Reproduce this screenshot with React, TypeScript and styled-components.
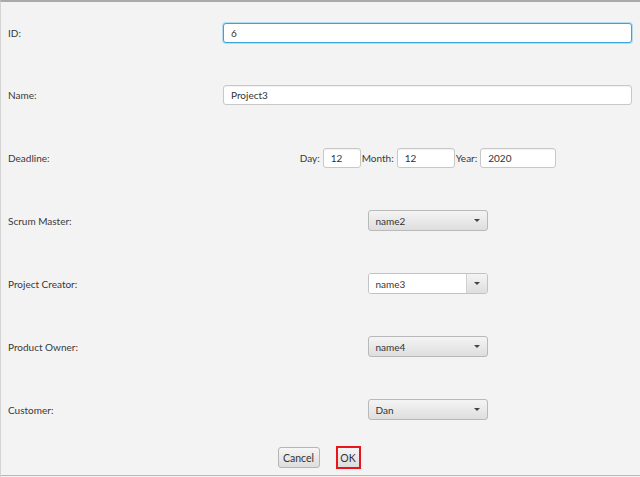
import React from "react";
import styled, { createGlobalStyle } from "styled-components";

const GlobalStyle = createGlobalStyle`
  html, body {
    margin: 0;
    padding: 0;
    background: #f4f4f4;
  }
  * {
    box-sizing: border-box;
  }
`;

const Dialog = styled.div`
  width: 640px;
  height: 477px;
  background: #f3f3f3;
  border-top: 2px solid #a9a9a9;
  border-left: 1px solid #d4d4d4;
  font-family: Lato, "Open Sans", sans-serif;
  font-size: 10px;
  color: #383838;
  display: flex;
  flex-direction: column;
`;

const Form = styled.div`
  display: grid;
  grid-template-columns: 215px 409px;
  grid-template-rows: 61px repeat(6, 63px);
  padding-left: 7px;
`;

const Label = styled.div`
  display: flex;
  align-items: center;
`;

const Field = styled.div<{ $center?: boolean }>`
  display: flex;
  align-items: center;
  justify-content: ${(p) => (p.$center ? "center" : "flex-start")};
`;

const TextInput = styled.div<{ $focused?: boolean; $width?: string }>`
  width: ${(p) => p.$width || "100%"};
  height: 20px;
  background: #ffffff;
  border: 1px solid ${(p) => (p.$focused ? "#3aa4d6" : "#c8c8c8")};
  box-shadow: ${(p) =>
    p.$focused ? "0 0 0 1px #b5dcef" : "inset 0 1px 1px rgba(0,0,0,0.06)"};
  border-radius: 3px;
  padding-left: 7px;
  display: flex;
  align-items: center;
  font-size: 10px;
  color: #333;
`;

const DateGroup = styled.div`
  display: flex;
  align-items: center;
`;

const DateLabel = styled.span`
  margin-left: 1px;
  margin-right: 3px;
`;

const Combo = styled.div`
  width: 120px;
  height: 21px;
  border: 1px solid #b9b9b9;
  border-radius: 3px;
  background: linear-gradient(#f4f4f4, #dedede);
  display: flex;
  align-items: center;
  justify-content: space-between;
  padding: 0 7px 0 7px;
  font-size: 10px;
  color: #333;
`;

const EditableCombo = styled.div`
  width: 120px;
  height: 21px;
  border: 1px solid #c2c2c2;
  border-radius: 3px;
  display: flex;
  overflow: hidden;
  font-size: 10px;
`;

const ComboText = styled.div`
  flex: 1;
  background: #ffffff;
  display: flex;
  align-items: center;
  padding-left: 7px;
  border-right: 1px solid #d0d0d0;
`;

const ComboButton = styled.div`
  width: 20px;
  background: linear-gradient(#f4f4f4, #dedede);
  display: flex;
  align-items: center;
  justify-content: center;
`;

const Arrow = styled.span`
  width: 0;
  height: 0;
  border-left: 3px solid transparent;
  border-right: 3px solid transparent;
  border-top: 3.5px solid #444444;
`;

const Buttons = styled.div`
  display: flex;
  justify-content: center;
  align-items: center;
  gap: 16px;
  margin-top: 5px;
  padding-right: 3px;
`;

const Button = styled.div<{ $marked?: boolean; $width: string }>`
  width: ${(p) => p.$width};
  height: ${(p) => (p.$marked ? "23px" : "21px")};
  border: ${(p) => (p.$marked ? "2px solid #e8151b" : "1px solid #b5b5b5")};
  border-radius: ${(p) => (p.$marked ? "0" : "3px")};
  background: linear-gradient(#f6f6f6, #dddddd);
  display: flex;
  align-items: center;
  justify-content: center;
  font-size: 10.5px;
  color: #333;
`;

const Footer = styled.div`
  flex: 1;
  display: flex;
  flex-direction: column;
  justify-content: space-between;
`;

const BottomLine = styled.div`
  height: 1px;
  background: #b8b8b8;
  margin-bottom: 1px;
`;

const ComboBox: React.FC<{ value: string }> = ({ value }) => (
  <Combo>
    <span>{value}</span>
    <Arrow />
  </Combo>
);

export default function App() {
  return (
    <>
      <GlobalStyle />
      <Dialog>
        <Form>
          <Label>ID:</Label>
          <Field>
            <TextInput $focused>6</TextInput>
          </Field>

          <Label>Name:</Label>
          <Field>
            <TextInput>Project3</TextInput>
          </Field>

          <Label>Deadline:</Label>
          <Field $center>
            <DateGroup>
              <DateLabel>Day:</DateLabel>
              <TextInput $width="38px">12</TextInput>
              <DateLabel>Month:</DateLabel>
              <TextInput $width="58px">12</TextInput>
              <DateLabel>Year:</DateLabel>
              <TextInput $width="76px">2020</TextInput>
            </DateGroup>
          </Field>

          <Label>Scrum Master:</Label>
          <Field $center>
            <ComboBox value="name2" />
          </Field>

          <Label>Project Creator:</Label>
          <Field $center>
            <EditableCombo>
              <ComboText>name3</ComboText>
              <ComboButton>
                <Arrow />
              </ComboButton>
            </EditableCombo>
          </Field>

          <Label>Product Owner:</Label>
          <Field $center>
            <ComboBox value="name4" />
          </Field>

          <Label>Customer:</Label>
          <Field $center>
            <ComboBox value="Dan" />
          </Field>
        </Form>
        <Footer>
          <Buttons>
            <Button $width="42px">Cancel</Button>
            <Button $width="25px" $marked>
              OK
            </Button>
          </Buttons>
          <BottomLine />
        </Footer>
      </Dialog>
    </>
  );
}
